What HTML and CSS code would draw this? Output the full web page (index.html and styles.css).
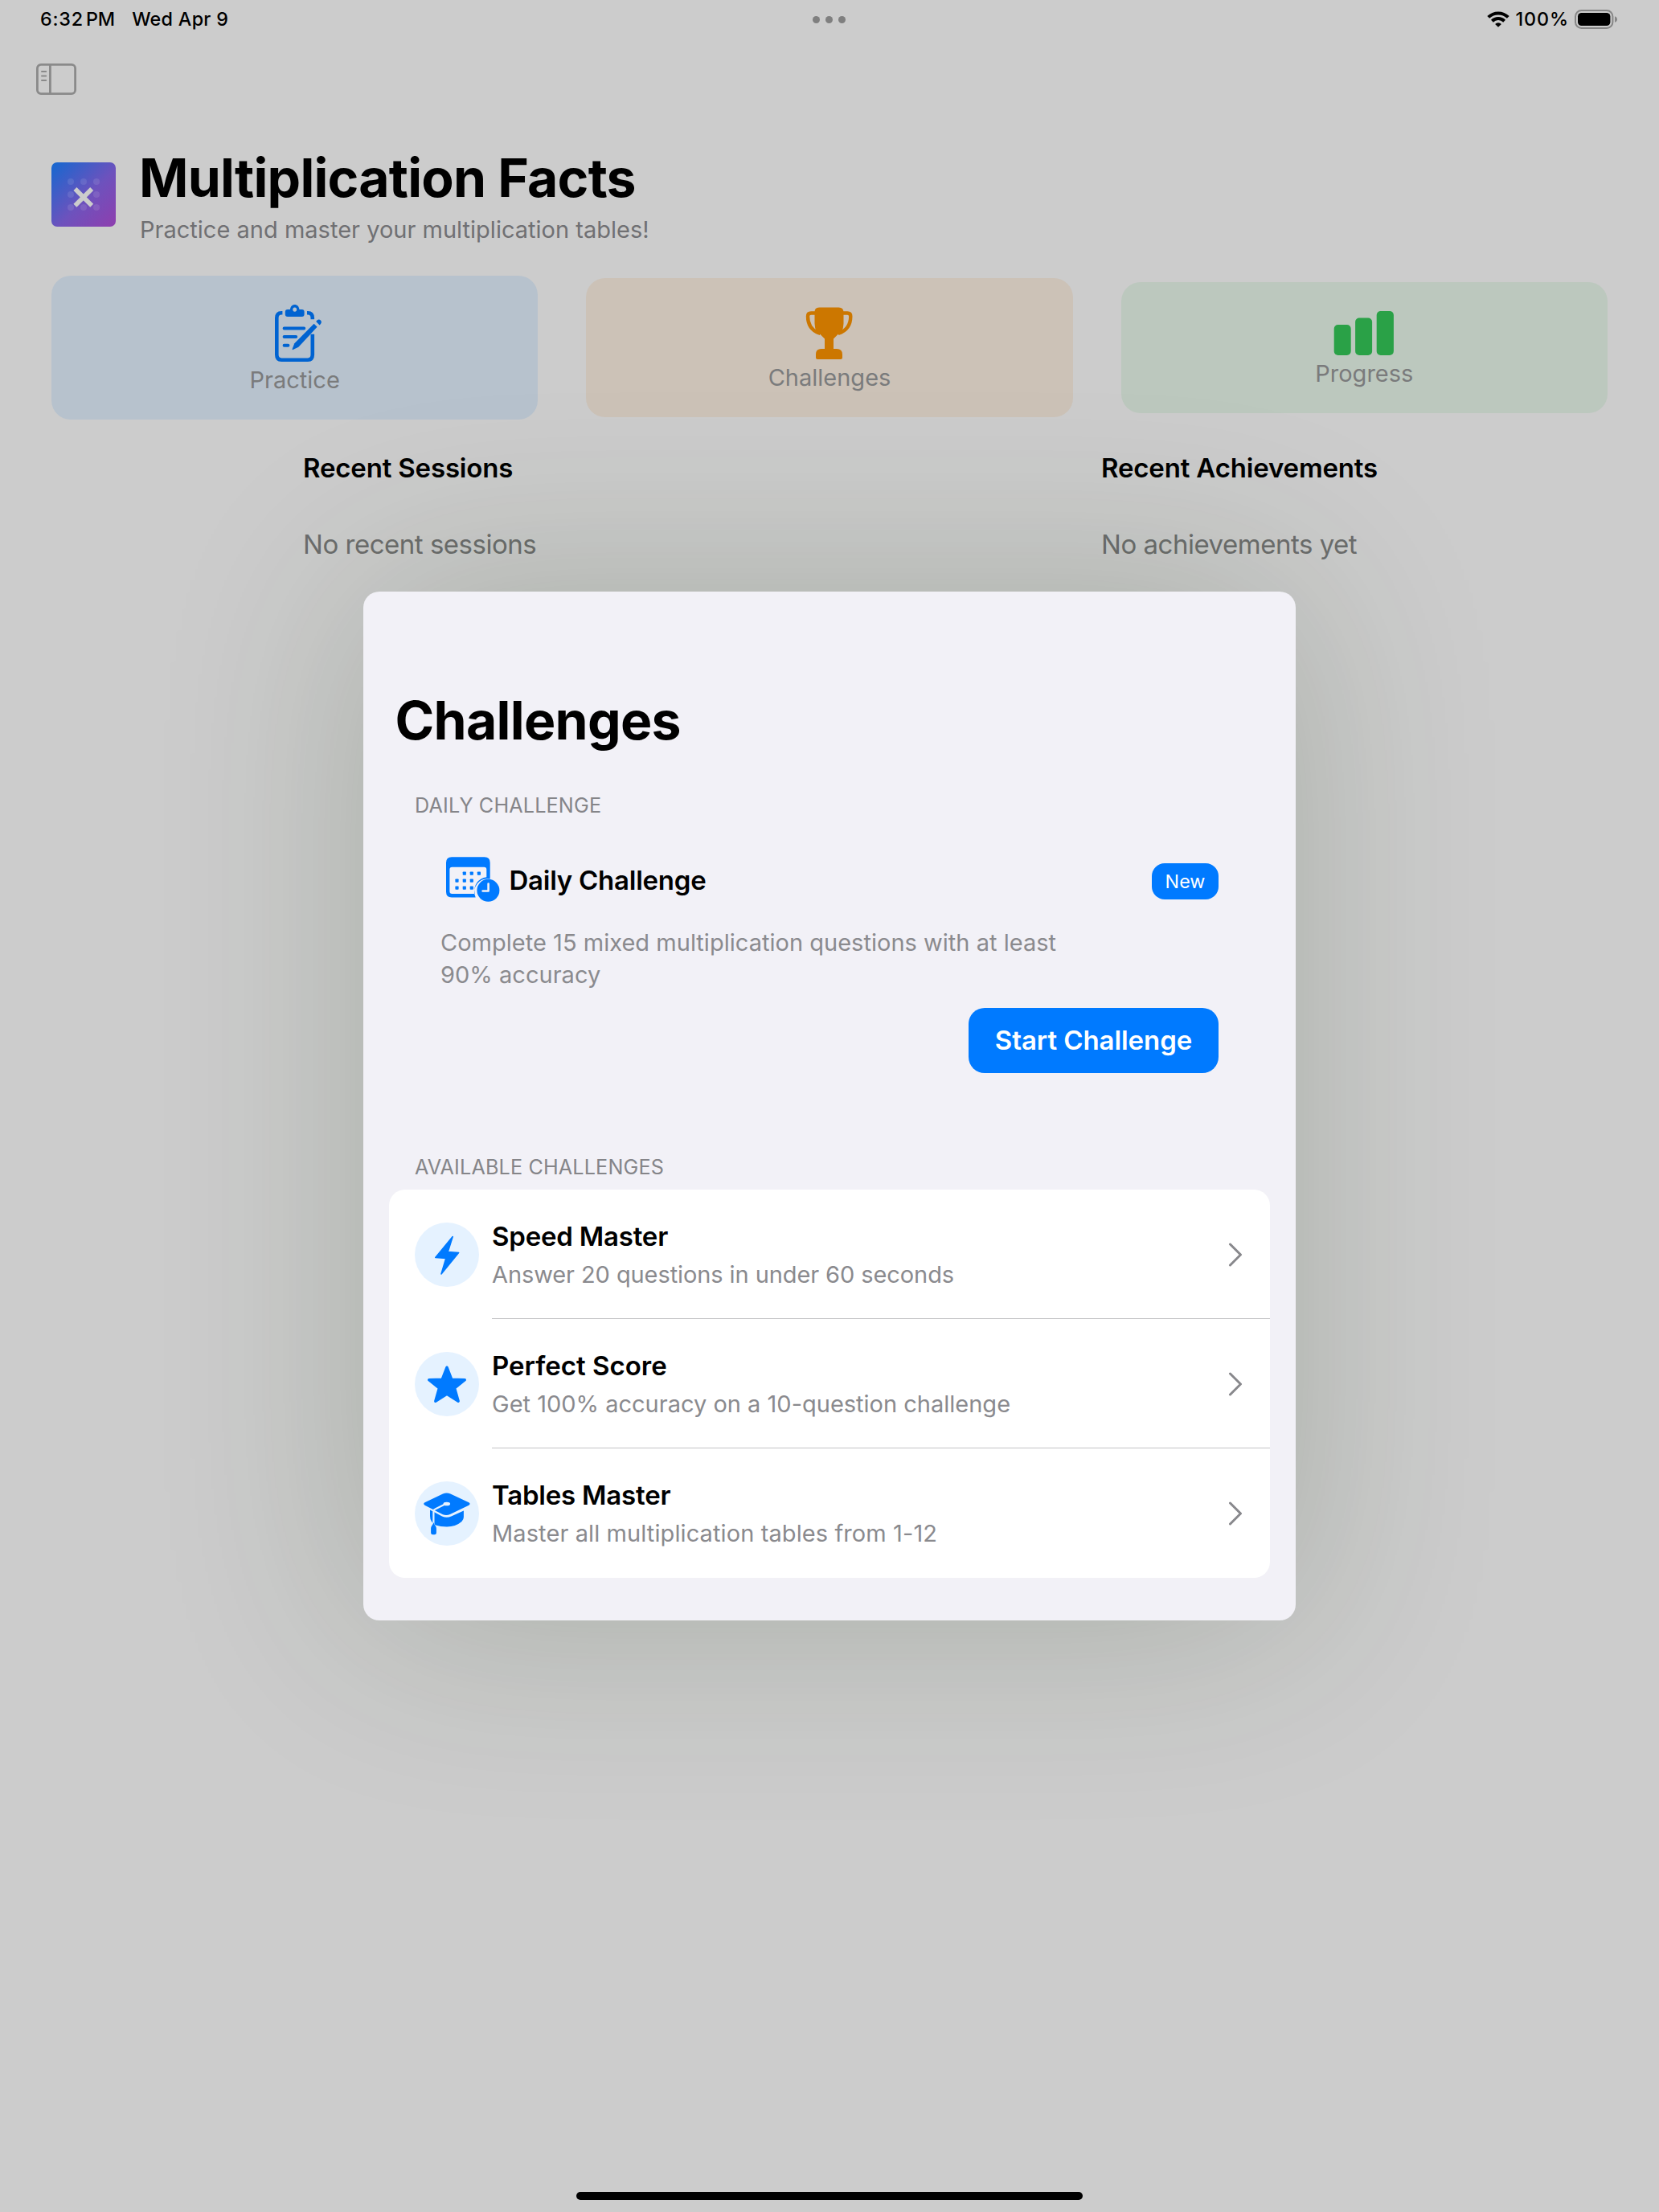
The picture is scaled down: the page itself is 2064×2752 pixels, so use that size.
FILE: index.html
```html
<!DOCTYPE html>
<html lang="en">
<head>
<meta charset="utf-8">
<title>Multiplication Facts</title>
<link rel="stylesheet" href="styles.css">
</head>
<body>
<div class="screen">
  <header class="status">
    <div class="status-left"><span class="clock"><span class="digits">6:32</span><span>PM</span></span><span class="date">Wed Apr 9</span></div>
    <div class="multitask"><i></i><i></i><i></i></div>
    <div class="status-right">
      <svg class="wifi" width="28" height="20" viewBox="0 0 28 20" fill="none" stroke="#000" stroke-width="4">
        <path d="M1.7 7.4a17.6 17.6 0 0 1 24.6 0"/>
        <path d="M6.4 12.2a10.9 10.9 0 0 1 15.2 0"/>
        <path d="M14 19.8l-3.9-3.9a5.6 5.6 0 0 1 7.8 0z" fill="#000" stroke="none"/>
      </svg>
      <span class="percent">100%</span>
      <svg class="battery" width="54" height="24" viewBox="0 0 54 24">
        <rect x="1" y="1" width="46.4" height="22" rx="7.5" fill="none" stroke="#868686" stroke-width="2"/>
        <rect x="4" y="4" width="40.4" height="16" rx="4.6"/>
        <path d="M50 8.2c4 1.3 4 6.3 0 7.6z" fill="#868686"/>
      </svg>
    </div>
  </header>

  <nav class="toolbar">
    <svg width="50" height="39" viewBox="0 0 50 39" fill="none" stroke="#8a8a8a">
      <rect x="1.4" y="1.4" width="47.2" height="36.2" rx="4.6" stroke-width="2.8"/>
      <path d="M17.4 1v37" stroke-width="2.8"/>
      <path d="M7 9.9h5.2M7 15.4h5.2M7 20.9h5.2" stroke-width="2" stroke-linecap="round"/>
    </svg>
  </nav>

  <section class="hero">
    <div class="app-icon">
      <svg width="80" height="80" viewBox="0 0 80 80">
        <g fill="#fff" fill-opacity=".1">
          <circle cx="24" cy="24" r="4"/><circle cx="40" cy="24" r="4"/><circle cx="56" cy="24" r="4"/>
          <circle cx="24" cy="40" r="4"/><circle cx="56" cy="40" r="4"/>
          <circle cx="24" cy="56" r="4"/><circle cx="40" cy="56" r="4"/><circle cx="56" cy="56" r="4"/>
        </g>
        <path d="M29.400 33l20.800 20.800M50.200 33L29.400 53.800" stroke="#ccc" stroke-width="5.600"/>
      </svg>
    </div>
    <div class="hero-text">
      <h1>Multiplication Facts</h1>
      <p>Practice and master your multiplication tables!</p>
    </div>
  </section>

  <section class="cards">
    <div class="card blue">
      <svg width="66" height="80" viewBox="334 375 66 80" fill="none" stroke="#0063d1" stroke-width="4.600">
        <path d="M351.400 389.300h-1.200q-5.900 0-5.900 6.400v45.600q0 6.400 5.900 6.400h32.800q5.800 0 5.800-6.400v-25.500M382 389.300h1q5.800 0 5.800 6.400v1.500"/>
        <path d="M357.800 385h3.200c.6-8 10.800-8 11.400 0h3.200q3 0 3 3v3q0 3-3 3h-17.800q-3 0-3-3v-3q0-3 3-3zm8.900-2.600a2.500 2.700 0 1 0 .01 0z" fill="#0063d1" fill-rule="evenodd" stroke="none"/>
        <path d="M353.600 408.400h24.600M353.600 418.900h14.600M353.600 429.800h4.800" stroke-width="4" stroke-linecap="round"/>
        <path d="M390.600 402.800l4 3.900-23.200 25-7.300 3.500-.6-.6 2.800-7.300z" fill="#0063d1" stroke="none"/>
        <path d="M393.200 400l1.300-1.400c2.700-3.100 7.300 1.200 4.500 4.300l-1.500 1.500z" fill="#0063d1" stroke="none"/>
      </svg>
      <span>Practice</span>
    </div>
    <div class="card orange">
      <svg width="60" height="74" viewBox="1002 378 60 74" fill="#cc7700">
        <path d="M1013.500 388.500q0-6 6-6h24q6 0 6 6v14q0 5-2.500 11l-4 2-6 6v12.500h4q7 0 7 7v4q0 2-2 2h-29q-2 0-2-2v-4q0-7 7-7h4v-12.500l-6-6-4-2q-2.500-6-2.500-11z"/>
        <path d="M1014 389.500h-5q-4 0-4 4c0 10 5 18 15.500 21.500M1049 389.500h5.300q4 0 4 4c0 10-5 18-15.500 21.500" fill="none" stroke="#cc7700" stroke-width="4.400"/>
      </svg>
      <span>Challenges</span>
    </div>
    <div class="card green">
      <svg width="76" height="64" viewBox="1659.300 383 76 64" fill="#2aa147">
        <rect x="1660" y="404" width="21" height="38" rx="5"/>
        <rect x="1686.400" y="395.500" width="21" height="46.500" rx="5"/>
        <rect x="1713" y="387" width="21.200" height="55" rx="5"/>
      </svg>
      <span>Progress</span>
    </div>
  </section>

  <section class="recent">
    <div>
      <h2>Recent Sessions</h2>
      <p>No recent sessions</p>
    </div>
    <div>
      <h2>Recent Achievements</h2>
      <p>No achievements yet</p>
    </div>
  </section>

  <div class="home-indicator"></div>
</div>

<div class="overlay">
  <main class="modal">
    <h1>Challenges</h1>
    <h3>DAILY CHALLENGE</h3>
    <section class="daily">
      <div class="daily-head">
        <svg width="74" height="60" viewBox="548 1066.500 74 60">
          <path fill="#007aff" fill-rule="evenodd" d="M562 1066.700h40.700q7 0 7 7v20.300a16.500 16.500 0 0 0-18 23h-29.700q-7 0-7-7v-36.300q0-7 7-7zm.4 12.600q-3 0-3 3v27.200q0 3 3 3h28.400a16.500 16.500 0 0 1 14.500-20.700v-9.500q0-3-3-3z"/>
          <g fill="#007aff">
            <rect x="575.700" y="1085" width="4.200" height="4.200" rx=".8"/><rect x="584.700" y="1085" width="4.200" height="4.200" rx=".8"/><rect x="593.800" y="1085" width="4.200" height="4.200" rx=".8"/>
            <rect x="566.400" y="1094" width="4.200" height="4.200" rx=".8"/><rect x="575.700" y="1094" width="4.200" height="4.200" rx=".8"/><rect x="584.700" y="1094" width="4.200" height="4.200" rx=".8"/>
            <rect x="566.400" y="1103" width="4.200" height="4.200" rx=".8"/><rect x="575.700" y="1103" width="4.200" height="4.200" rx=".8"/><rect x="584.700" y="1103" width="4.200" height="4.200" rx=".8"/>
            <circle cx="607.400" cy="1108.300" r="14"/>
          </g>
          <path d="M607.600 1100v9h-7" fill="none" stroke="#f2f1f7" stroke-width="2.600" stroke-linecap="round" stroke-linejoin="round"/>
        </svg>
        <h2>Daily Challenge</h2>
        <span class="badge">New</span>
      </div>
      <p>Complete 15 mixed multiplication questions with at least<br>90% accuracy</p>
      <button class="start">Start Challenge</button>
    </section>

    <h3>AVAILABLE CHALLENGES</h3>
    <ul class="list">
      <li>
        <svg class="round" width="80" height="80" viewBox="0 0 80 80">
          <path d="M47.200 17.500L41.200 36.500 54.600 37.500 33 64 38.800 44.500 25.800 43.500z" fill="#007aff" stroke="#007aff" stroke-width="1.600" stroke-linejoin="round"/>
        </svg>
        <div class="row">
          <div class="row-text"><h2>Speed Master</h2><p class="tight">Answer 20 questions in under 60 seconds</p></div>
          <svg width="18" height="30" viewBox="0 0 18 30" fill="none" stroke="#88888c" stroke-width="3" stroke-linecap="round" stroke-linejoin="round"><path d="M2.500 2L15.500 15 2.500 28"/></svg>
        </div>
      </li>
      <li>
        <svg class="round" width="80" height="80" viewBox="0 0 80 80">
          <path d="M40 19.200L45.800 34.200 62.300 34.700 49.600 45 54.200 61.300 40 52.400 25.800 61.300 30.400 45 17.700 34.700 34.200 34.200z" fill="#007aff" stroke="#007aff" stroke-width="3.400" stroke-linejoin="round"/>
        </svg>
        <div class="row">
          <div class="row-text"><h2 class="normal">Perfect Score</h2><p>Get 100% accuracy on a 10-question challenge</p></div>
          <svg width="18" height="30" viewBox="0 0 18 30" fill="none" stroke="#88888c" stroke-width="3" stroke-linecap="round" stroke-linejoin="round"><path d="M2.500 2L15.500 15 2.500 28"/></svg>
        </div>
      </li>
      <li>
        <svg class="round" width="80" height="80" viewBox="0 0 80 80">
          <path d="M12.500 26.300L35 15.500q4.700-1.800 9.400 0L67.300 26.300q2.600 1.700 0 3.400L44.400 40.700q-4.700 2.300-9.400.6L12.500 29.700q-2.600-1.700 0-3.400z" fill="#007aff"/>
          <path d="M19 35.500L34 43.500q5.700 2.500 11.400 0L60.900 36.500V44.500q0 3-2.500 5.400Q51 56.400 40 56.400 32 56.400 26 54.400 19 50.500 19 43z" fill="#007aff"/>
          <path d="M23.400 58V37.500Q23.400 35.500 25.500 34.600L37.500 28.600" fill="none" stroke="#e5f2ff" stroke-width="2.200"/>
          <ellipse cx="39.800" cy="28" rx="4.300" ry="2.300" fill="#e5f2ff"/>
          <path d="M23.400 51c1 3.500 3.500 4.500 3.500 8v5q0 2.300-2.300 2.300h-2.200q-2.300 0-2.300-2.300v-5c0-3.500 2.300-4.500 3.300-8z" fill="#007aff"/>
        </svg>
        <div class="row">
          <div class="row-text"><h2>Tables Master</h2><p class="loose">Master all multiplication tables from 1-12</p></div>
          <svg width="18" height="30" viewBox="0 0 18 30" fill="none" stroke="#88888c" stroke-width="3" stroke-linecap="round" stroke-linejoin="round"><path d="M2.500 2L15.500 15 2.500 28"/></svg>
        </div>
      </li>
    </ul>
  </main>
</div>
</body>
</html>
```
FILE: styles.css
```css
* { box-sizing: border-box; margin: 0; padding: 0; }
body {
  font-family: Inter, "Liberation Sans", sans-serif;
  background: #ccc;
  color: #000;
  overflow: hidden;
}
svg { display: block; flex: none; }

.screen { display: flex; flex-direction: column; width: 2064px; height: 2752px; }

/* Status bar */
.status {
  display: grid;
  grid-template-columns: 1fr auto 1fr;
  align-items: center;
  height: 48px;
  padding: 0 51px 0 50px;
  font-size: 23.3px;
  font-weight: 500;
  line-height: 48px;
}
.status-left { display: flex; gap: 21px; }
.clock { display: flex; gap: 3px; }
.digits { letter-spacing: .8px; }
.date { letter-spacing: .3px; }
.multitask { display: flex; gap: 7px; }
.multitask i { width: 9px; height: 9px; border-radius: 50%; background: #7f7f7f; }
.status-right { display: flex; justify-content: flex-end; align-items: center; }
.percent { margin: 0 7px 0 8px; letter-spacing: .9px; }

.toolbar { height: 132px; padding: 31px 45px 0; }

/* Title block */
.hero { display: flex; align-items: center; gap: 30px; height: 123px; padding-left: 64px; }
.app-icon {
  width: 80px;
  height: 80px;
  border-radius: 7px;
  background: linear-gradient(135deg, #1468d0, #6d52bd 55%, #8f3eae);
}
.hero h1 { margin-left: -1px; font-size: 66px; line-height: 82px; font-weight: 700; letter-spacing: -.78px; }
.hero p { margin-top: 6px; font-size: 29px; line-height: 36px; letter-spacing: .01px; color: #707073; }

/* Shortcut cards */
.cards {
  display: grid;
  grid-template-columns: repeat(3, 1fr);
  gap: 60px;
  align-items: center;
  height: 179px;
  margin-top: 40px;
  padding: 0 64px;
}
.card {
  display: flex;
  flex-direction: column;
  align-items: center;
  padding: 32px 0 31px;
  border-radius: 24px;
  font-size: 29px;
  line-height: 36px;
  color: #7a7b7c;
}
.blue { background: #b7c2cd; }
.orange { background: #ccc2b7; }
.green { background: #bcc8be; }

.recent { display: grid; grid-template-columns: 993px auto; margin-top: 40px; padding-left: 377px; }
.recent h2 { font-size: 33px; line-height: 40px; font-weight: 600; letter-spacing: -.17px; }
.recent p { margin-top: 55px; font-size: 33px; line-height: 40px; letter-spacing: -.48px; color: #6c6d6d; }

.home-indicator { width: 630px; height: 10px; margin: auto auto 15px; border-radius: 5px; background: #000; }

/* Modal sheet */
.overlay { position: absolute; inset: 0; display: flex; align-items: center; justify-content: center; overflow: hidden; }
.modal {
  width: 1160px;
  height: 1280px;
  padding: 120px 32px 0;
  border-radius: 20px;
  background: #f2f1f7;
  box-shadow: 0 0 280px rgba(30, 54, 20, .2);
}
.modal h1 { padding-left: 7.5px; font-size: 66px; line-height: 80px; font-weight: 700; letter-spacing: -.71px; }
.modal h3 { padding-left: 32px; font-size: 25.2px; line-height: 32px; font-weight: 400; letter-spacing: .14px; color: #858589; }
.modal h1 + h3 { margin-top: 50px; }
.modal h2 { font-size: 33px; line-height: 40px; font-weight: 600; letter-spacing: -.2px; }
.modal h2.normal { letter-spacing: 0; }
.modal p { font-size: 29px; color: #8a8a8e; }

.daily { display: flex; flex-direction: column; height: 418px; padding: 48px 64px 0; }
.daily-head { display: flex; align-items: center; gap: 11.5px; }
.daily-head h2 { margin-bottom: 2px; letter-spacing: -.25px; }
.badge {
  margin-left: auto;
  width: 83px;
  height: 45px;
  border-radius: 16px;
  background: #007aff;
  color: #fff;
  font-size: 23.3px;
  line-height: 45px;
  text-align: center;
}
.daily p { margin-top: 27px; line-height: 40px; letter-spacing: .02px; }
.start {
  align-self: flex-end;
  width: 311px;
  height: 81px;
  margin-top: 21px;
  border: 0;
  border-radius: 20px;
  background: #007aff;
  color: #fff;
  font: 600 33px/79px Inter, "Liberation Sans", sans-serif;
  letter-spacing: -.08px;
}

.list { margin-top: 12px; border-radius: 20px; background: #fff; list-style: none; overflow: hidden; }
.list li { display: flex; align-items: center; gap: 16px; height: 161px; padding-left: 32px; }
.round { border-radius: 50%; background: #e5f2ff; }
.row {
  display: flex;
  flex: 1;
  align-items: center;
  justify-content: space-between;
  height: 161px;
  padding: 1px 34px 0 0;
  border-bottom: 1px solid #c4c4c6;
}
.list li:last-child .row { padding-top: 0; border-bottom: 0; }
.row p { margin-top: 10px; line-height: 36px; }
.row p.tight { letter-spacing: -.09px; }
.row p.loose { letter-spacing: .1px; }
```
